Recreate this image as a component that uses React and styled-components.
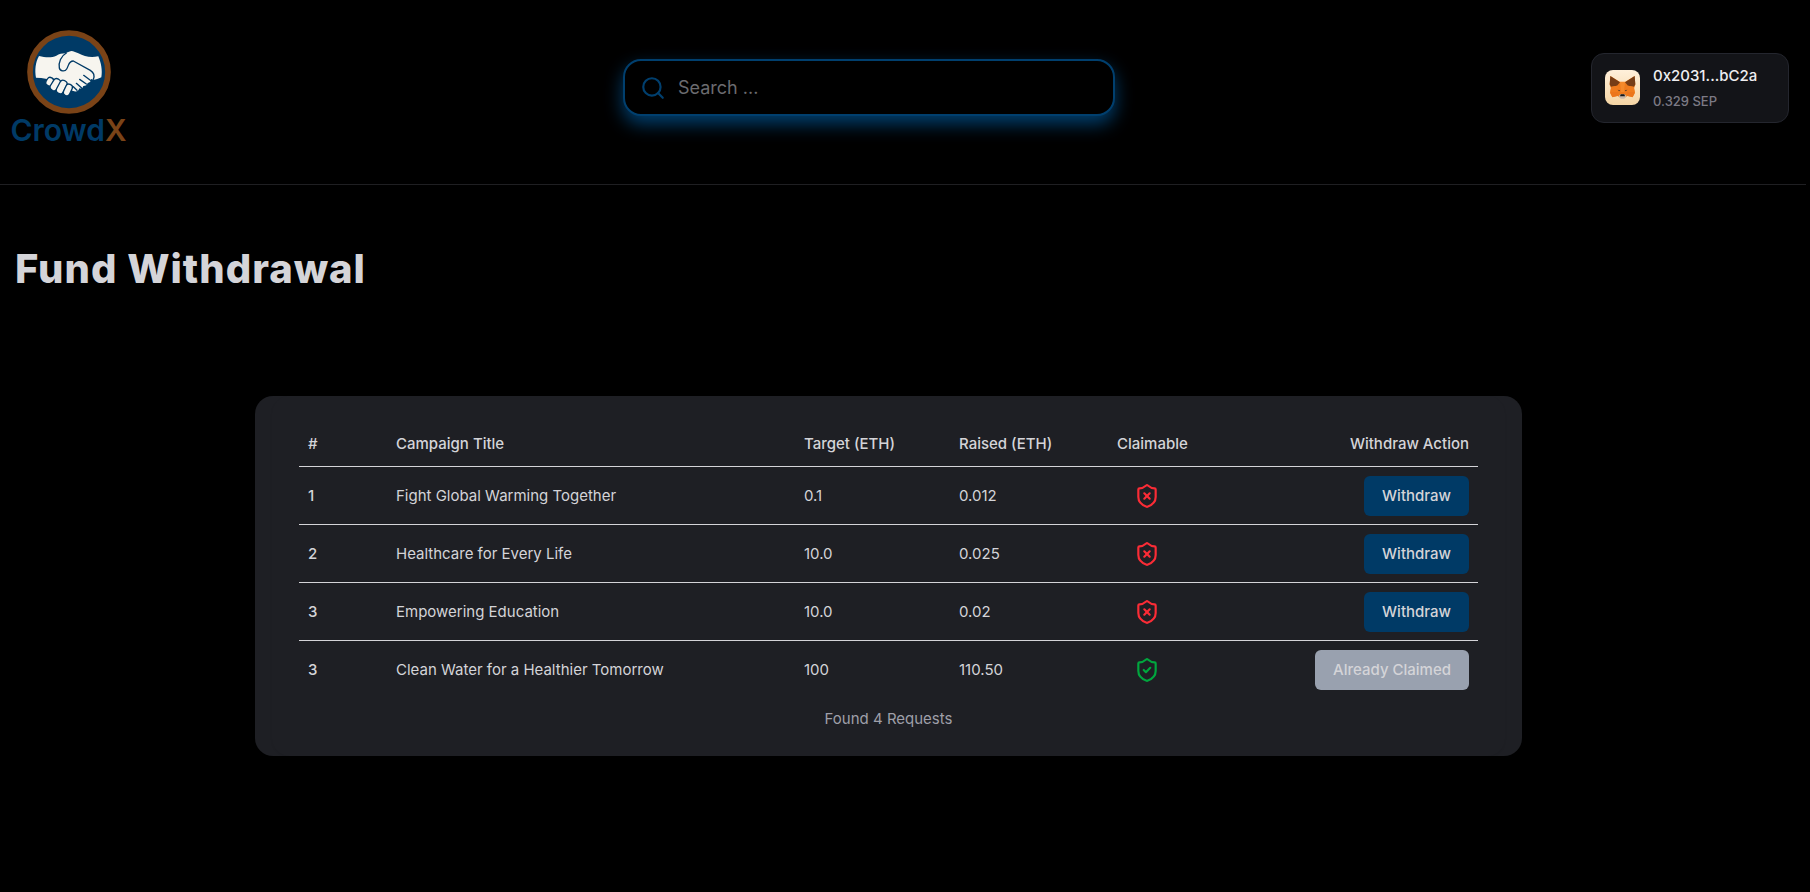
import React from "react";
import styled, { createGlobalStyle, css } from "styled-components";
import { Search, ShieldCheck, ShieldX } from "lucide-react";

const GlobalStyle = createGlobalStyle`
  *, *::before, *::after { box-sizing: border-box; }
  body {
    margin: 0;
    background: #000;
    color: #d4d4d8;
    font-family: Inter, "Liberation Sans", sans-serif;
    font-size: 15px;
    line-height: 22px;
  }
  button, input { font: inherit; color: inherit; }
`;

const Page = styled.div`
  padding-right: 4px;
`;

const Header = styled.header`
  display: flex;
  align-items: center;
  justify-content: space-between;
  padding: 30px 17px 39px 0;
  border-bottom: 1px solid #1f1f22;
`;

const LogoLink = styled.a`
  display: flex;
  flex-direction: column;
  align-items: center;
  width: 147px;
  padding-right: 10px;
  text-decoration: none;
`;

const LogoName = styled.span`
  padding-top: 1px;
  font-size: 30px;
  font-weight: 600;
  line-height: 30px;
  color: #003a66;
`;

const LogoAccent = styled.span`
  color: #7a4317;
`;

const SearchBox = styled.label`
  display: flex;
  align-items: center;
  gap: 12px;
  width: 492px;
  height: 57px;
  padding: 0 15px;
  border: 2px solid #003f6e;
  border-radius: 18px;
  background: #000;
  color: #003f6e;
  box-shadow: 0 8px 18px #003f6e;
`;

const SearchInput = styled.input.attrs({ type: "search" })`
  flex: 1;
  min-width: 0;
  padding: 0;
  border: 0;
  outline: 0;
  background: transparent;
  color: #d4d4d8;
  font-size: 18px;
  &::placeholder { color: #6b6b6f; opacity: 1; }
`;

const WalletButton = styled.button`
  display: flex;
  align-items: center;
  gap: 13px;
  width: 198px;
  height: 70px;
  padding: 0 13px;
  border: 1px solid #24262e;
  border-radius: 13px;
  background: #131418;
  text-align: left;
`;

const WalletText = styled.span`
  display: flex;
  flex-direction: column;
  gap: 4px;
`;

const WalletAddress = styled.span`
  color: #eeeef0;
  font-size: 15px;
  font-weight: 500;
  line-height: 22px;
`;

const WalletBalance = styled.span`
  color: #7c7a85;
  font-size: 13px;
  font-weight: 500;
  line-height: 20px;
`;

const Main = styled.main`
  padding: 57px 29px 0 0;
`;

const Title = styled.h1`
  margin: 0;
  padding-left: 15px;
  font-size: 40px;
  font-weight: 800;
  line-height: 54px;
  letter-spacing: 1px;
`;

const Card = styled.section`
  width: 70vw;
  margin: 100px auto 0;
  padding: 0 17px;
  border-radius: 18px;
  background: #1e1f24;
`;

const CardBody = styled.div`
  padding: 26px 27px;
  border-radius: 18px;
  box-shadow: 0 1px 2px rgba(0, 0, 0, 0.08);
`;

const Table = styled.table`
  width: 100%;
  table-layout: fixed;
  border-collapse: collapse;
  caption-side: bottom;
`;

const Caption = styled.caption`
  padding-top: 10px;
  color: #9f9fa9;
`;

const Col = styled.col`
  width: ${(p) => p.$width || "auto"};
`;

const Row = styled.tr`
  border-bottom: 1px solid #d4d4d8;
  tbody > &:last-child { border-bottom: 0; }
`;

const cell = css`
  padding: 0 9px;
  text-align: ${(p) => (p.$end ? "right" : "left")};
  white-space: nowrap;
`;

const HeadCell = styled.th`
  ${cell}
  height: 44px;
  font-weight: 500;
`;

const IndexCell = styled.th`
  ${cell}
  padding-top: 2px;
  font-weight: 500;
`;

const Cell = styled.td`
  ${cell}
  height: 58px;
  padding-top: 2px;
`;

const Status = styled.span`
  display: flex;
  padding-left: 17px;
  color: ${(p) => (p.$ok ? "#00a63e" : "#fb2c36")};
`;

const ActionButton = styled.button`
  height: 40px;
  padding: 0 18px;
  border: 0;
  border-radius: 6px;
  background: #003a66;
  color: #d4d4d8;
  font-weight: 500;
  vertical-align: middle;
  &:disabled { background: #99a1af; }
`;

const campaigns = [
  { no: 1, title: "Fight Global Warming Together", target: "0.1", raised: "0.012" },
  { no: 2, title: "Healthcare for Every Life", target: "10.0", raised: "0.025" },
  { no: 3, title: "Empowering Education", target: "10.0", raised: "0.02" },
  { no: 3, title: "Clean Water for a Healthier Tomorrow", target: "100", raised: "110.50", claimed: true },
];

function HandshakeLogo() {
  return (
    <svg width="84" height="84" viewBox="80 29 252 252" aria-hidden="true">
      <circle cx="206" cy="155" r="117" fill="#003a66" stroke="#7a4317" strokeWidth="17" />
      <g fill="#f7f5ef">
        <path d="M116 107C136 112 154 113 168 106C176 101 186 99 194 99L206 94Q214 90 222 94L234 99C252 109 272 113 294 108C302 127 307 150 303 171C294 176 286 178 280 178L272 176Q272 187 262 188Q260 197 249 197Q247 207 237 204Q233 216 222 213L185 202L146 182L140 176Q122 172 107 172C103 150 105 126 116 107Z" />
        <g stroke="#003a66" strokeWidth="4">
          <rect x="-10" y="-13" width="20" height="26" rx="9" transform="translate(148 184) rotate(32)" />
          <rect x="-11" y="-19" width="22" height="38" rx="10" transform="translate(165 193) rotate(32)" />
          <rect x="-11" y="-21" width="22" height="42" rx="10" transform="translate(184 200) rotate(28)" />
          <rect x="-10" y="-17" width="20" height="36" rx="9" transform="translate(203 208) rotate(25)" />
        </g>
      </g>
      <g fill="none" stroke="#003a66" strokeWidth="4" strokeLinecap="round" strokeLinejoin="round">
        <path d="M198 98C182 107 174 126 177 143C179 153 194 155 199 146C206 134 205 122 219 122L270 150Q286 160 279 177" />
        <path d="M250 165L270 180M238 177L258 191M228 189L244 203M219 199L230 210" />
      </g>
    </svg>
  );
}

function FoxIcon() {
  return (
    <svg width="35" height="35" viewBox="0 0 105 105" aria-hidden="true">
      <defs>
        <linearGradient id="fox-bg" x1="0" y1="0" x2="0" y2="1">
          <stop offset="0" stopColor="#fff0da" />
          <stop offset="1" stopColor="#f5d5a5" />
        </linearGradient>
      </defs>
      <rect width="105" height="105" rx="24" fill="url(#fox-bg)" />
      <path d="M16 18L44 35H61L89 18L91 44L87 55L90 69L83 82L67 78L58 84H47L38 78L22 82L15 69L18 55L14 44Z" fill="#ee7b1d" />
      <path d="M16 18L45 37L36 47L18 50L14 43ZM89 18L60 37L69 47L87 50L91 43Z" fill="#763d16" />
      <path d="M36 47L18 51L16 66L38 66L46 58ZM69 47L87 51L89 66L67 66L59 58Z" fill="#f07c1e" />
      <path d="M38 66L16 66L22 81L39 77ZM67 66L89 66L83 81L66 77Z" fill="#ec761d" />
      <path d="M45 36H60L57 66H48Z" fill="#f58a2b" />
      <path d="M38 59L45 61L43 64ZM67 59L60 61L62 64Z" fill="#3a322c" />
      <path d="M41 78L46 73H59L64 78L58 86H47Z" fill="#c9b9aa" />
      <path d="M47 73H58L60 79H45Z" fill="#161616" />
    </svg>
  );
}

function CampaignRow({ campaign }) {
  const { no, title, target, raised, claimed } = campaign;
  const Icon = claimed ? ShieldCheck : ShieldX;
  return (
    <Row>
      <IndexCell scope="row">{no}</IndexCell>
      <Cell>{title}</Cell>
      <Cell>{target}</Cell>
      <Cell>{raised}</Cell>
      <Cell>
        <Status $ok={claimed} role="img" aria-label={claimed ? "Yes" : "No"}>
          <Icon size={26} />
        </Status>
      </Cell>
      <Cell $end>
        <ActionButton type="button" disabled={claimed}>
          {claimed ? "Already Claimed" : "Withdraw"}
        </ActionButton>
      </Cell>
    </Row>
  );
}

export default function App() {
  return (
    <Page>
      <GlobalStyle />
      <Header>
        <LogoLink href="#">
          <HandshakeLogo />
          <LogoName>
            Crowd<LogoAccent>X</LogoAccent>
          </LogoName>
        </LogoLink>
        <SearchBox>
          <Search size={26} aria-hidden="true" />
          <SearchInput placeholder="Search ..." aria-label="Search" />
        </SearchBox>
        <WalletButton type="button">
          <FoxIcon />
          <WalletText>
            <WalletAddress>0x2031...bC2a</WalletAddress>
            <WalletBalance>0.329 SEP</WalletBalance>
          </WalletText>
        </WalletButton>
      </Header>
      <Main>
        <Title>Fund Withdrawal</Title>
        <Card>
          <CardBody>
            <Table>
              <Caption>Found {campaigns.length} Requests</Caption>
              <colgroup>
                <Col $width="88px" />
                <Col />
                <Col $width="155px" />
                <Col $width="158px" />
                <Col $width="159px" />
                <Col $width="211px" />
              </colgroup>
              <thead>
                <Row>
                  <HeadCell scope="col">#</HeadCell>
                  <HeadCell scope="col">Campaign Title</HeadCell>
                  <HeadCell scope="col">Target (ETH)</HeadCell>
                  <HeadCell scope="col">Raised (ETH)</HeadCell>
                  <HeadCell scope="col">Claimable</HeadCell>
                  <HeadCell scope="col" $end>Withdraw Action</HeadCell>
                </Row>
              </thead>
              <tbody>
                {campaigns.map((campaign) => (
                  <CampaignRow key={campaign.title} campaign={campaign} />
                ))}
              </tbody>
            </Table>
          </CardBody>
        </Card>
      </Main>
    </Page>
  );
}
